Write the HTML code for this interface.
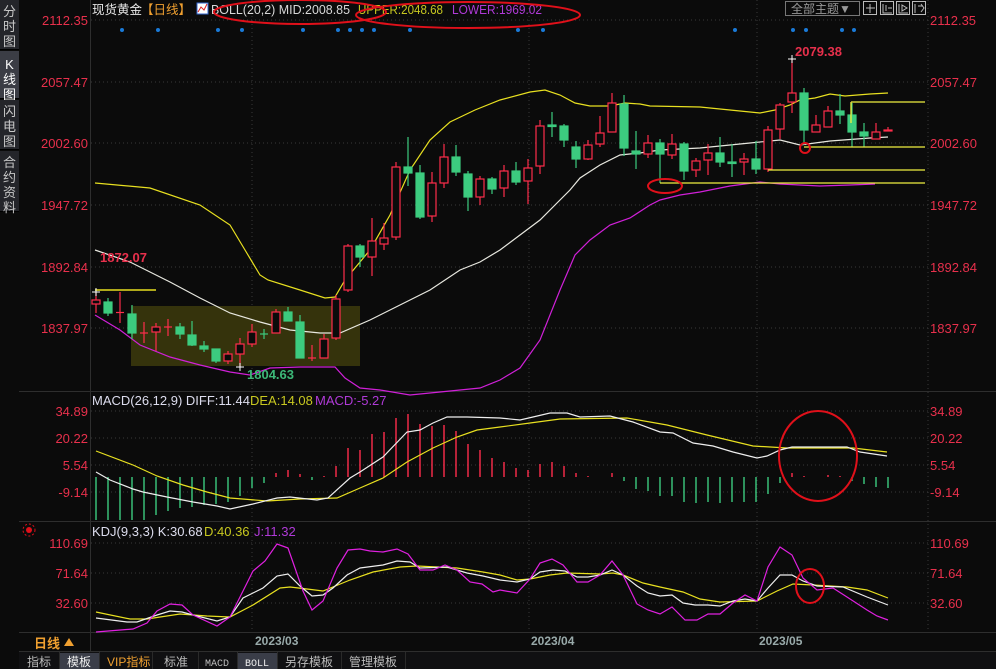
<!DOCTYPE html>
<html><head><meta charset="utf-8"><style>
*{margin:0;padding:0}
body{width:996px;height:669px;background:#0b0b0b;overflow:hidden;position:relative;font-family:"Liberation Sans","Noto Sans CJK SC",sans-serif}
svg{position:absolute;left:0;top:0}
.sb{position:absolute;left:0;width:19px;background:#24252a;color:#c8c8c8;font-size:13px;line-height:15px;text-align:center;border-bottom:1px solid #000}
</style></head><body>
<svg width="996" height="669" viewBox="0 0 996 669" font-family="Liberation Sans, Noto Sans CJK SC, sans-serif">
<rect width="996" height="669" fill="#0b0b0b"/>
<g stroke="#2e2e2e" stroke-width="1">
<line x1="90.5" y1="0" x2="90.5" y2="652"/>
<line x1="19" y1="391.5" x2="996" y2="391.5"/>
<line x1="19" y1="521.5" x2="996" y2="521.5"/>
<line x1="19" y1="632.5" x2="996" y2="632.5"/>
<line x1="19" y1="651.5" x2="996" y2="651.5"/>
</g>
<g stroke="#3a3a3a" stroke-dasharray="1,3">
<line x1="91" y1="20" x2="928" y2="20"/><line x1="91" y1="82" x2="928" y2="82"/><line x1="91" y1="143" x2="928" y2="143"/><line x1="91" y1="205" x2="928" y2="205"/><line x1="91" y1="267" x2="928" y2="267"/><line x1="91" y1="328" x2="928" y2="328"/>
<line x1="91" y1="411" x2="928" y2="411"/><line x1="91" y1="438" x2="928" y2="438"/><line x1="91" y1="465" x2="928" y2="465"/><line x1="91" y1="492" x2="928" y2="492"/>
<line x1="91" y1="543" x2="928" y2="543"/><line x1="91" y1="573" x2="928" y2="573"/><line x1="91" y1="603" x2="928" y2="603"/>
<line x1="252" y1="0" x2="252" y2="632"/><line x1="529" y1="0" x2="529" y2="632"/><line x1="757" y1="0" x2="757" y2="632"/><line x1="928" y1="0" x2="928" y2="632"/>
</g>
<g fill="#e8304c" font-size="13">
<g text-anchor="end"><text x="88" y="25">2112.35</text><text x="88" y="87">2057.47</text><text x="88" y="148">2002.60</text><text x="88" y="210">1947.72</text><text x="88" y="272">1892.84</text><text x="88" y="333">1837.97</text>
<text x="88" y="416">34.89</text><text x="88" y="443">20.22</text><text x="88" y="470">5.54</text><text x="88" y="497">-9.14</text>
<text x="88" y="548">110.69</text><text x="88" y="578">71.64</text><text x="88" y="608">32.60</text></g>
<text x="930" y="25">2112.35</text><text x="930" y="87">2057.47</text><text x="930" y="148">2002.60</text><text x="930" y="210">1947.72</text><text x="930" y="272">1892.84</text><text x="930" y="333">1837.97</text>
<text x="930" y="416">34.89</text><text x="930" y="443">20.22</text><text x="930" y="470">5.54</text><text x="930" y="497">-9.14</text>
<text x="930" y="548">110.69</text><text x="930" y="578">71.64</text><text x="930" y="608">32.60</text>
</g>
<g font-size="12.5">
<text x="92" y="14" fill="#e8e8e8">现货黄金</text>
<text x="141" y="14" fill="#f0a030">【日线】</text>
<rect x="197" y="3" width="11" height="11" fill="#fff" stroke="#36c" /><polyline points="198,12 201,7 204,10 207,4" stroke="#d22" fill="none"/>
<text x="211" y="14" fill="#d8d8d8" textLength="139" lengthAdjust="spacingAndGlyphs">BOLL(20,2) MID:2008.85</text>
<text x="358" y="14" fill="#c8c820" textLength="85" lengthAdjust="spacingAndGlyphs">UPPER:2048.68</text>
<text x="452" y="14" fill="#b03ad8" textLength="90" lengthAdjust="spacingAndGlyphs">LOWER:1969.02</text>
</g>
<ellipse cx="300" cy="12" rx="86" ry="12" fill="none" stroke="#e0101a" stroke-width="2"/>
<ellipse cx="468" cy="15" rx="112" ry="13" fill="none" stroke="#e0101a" stroke-width="2"/>
<rect x="785.5" y="1.5" width="74" height="14" fill="none" stroke="#777"/>
<text x="791" y="13" font-size="12" fill="#999">全部主题▼</text>
<g fill="none" stroke="#bbb"><rect x="863.5" y="1.5" width="13" height="13"/><rect x="880.5" y="1.5" width="13" height="13"/><rect x="896.5" y="1.5" width="13" height="13"/><rect x="912.5" y="1.5" width="13" height="13"/>
<path d="M870 4v9M866 8h9M883 4v9h9M886 5v6M888 8h4M899 4v9h9M902 5l5 3-5 3zM915 4v9M918 6h5M921 4l3 4-3 4"/></g>
<g fill="#1a7ad8"><circle cx="122" cy="30" r="2"/><circle cx="158" cy="30" r="2"/><circle cx="218" cy="30" r="2"/><circle cx="242" cy="30" r="2"/><circle cx="303" cy="30" r="2"/><circle cx="338" cy="30" r="2"/><circle cx="350" cy="30" r="2"/><circle cx="362" cy="30" r="2"/><circle cx="374" cy="30" r="2"/><circle cx="410" cy="30" r="2"/><circle cx="518" cy="30" r="2"/><circle cx="543" cy="30" r="2"/><circle cx="735" cy="30" r="2"/><circle cx="793" cy="30" r="2"/><circle cx="806" cy="30" r="2"/><circle cx="842" cy="30" r="2"/><circle cx="854" cy="30" r="2"/></g>
<rect x="131" y="306" width="229" height="60" fill="#35330c"/>
<g fill="none" stroke-width="1.2">
<polyline stroke="#e8e020" points="95,183 150,188 200,205 230,225 245,250 260,275 268,280 300,290 325,298 335,297 345,280 370,250 390,215 410,170 430,140 450,122 475,110 500,100 530,92 545,90 560,95 575,103 590,106 610,106 625,103 640,104 650,106 700,107 730,110 760,113 775,110 790,105 800,100 815,98 830,94 845,96 870,94 888,93"/>
<polyline stroke="#e8e8e0" points="95,250 130,262 170,282 200,298 230,313 260,322 290,330 320,333 340,333 370,320 400,305 430,290 460,270 480,262 500,250 520,235 540,220 555,205 570,190 580,178 600,165 620,155 640,153 660,150 700,148 720,146 750,143 780,140 800,145 830,141 870,138 888,137"/>
<polyline stroke="#d020d8" points="95,315 120,330 140,345 170,357 200,365 230,372 250,375 270,368 300,367 335,367 345,378 360,388 380,390 410,395 440,392 480,388 500,380 520,368 540,340 560,290 575,255 590,240 610,225 630,218 650,205 660,200 680,195 700,192 730,186 760,182 780,184 820,186 850,185 875,184"/>
</g>
<g stroke="#ff2d4b" stroke-width="1.2" fill="#0b0b0b">
<line x1="96" y1="292" x2="96" y2="313"/><rect x="92" y="300" width="8" height="4"/>
<line x1="120" y1="292" x2="120" y2="323"/><line x1="116" y1="312.5" x2="124" y2="312.5"/>
<line x1="144" y1="322" x2="144" y2="343"/><line x1="140" y1="333" x2="148" y2="333"/>
<line x1="156" y1="323" x2="156" y2="351"/><rect x="152" y="327" width="8" height="5"/>
<line x1="168" y1="319" x2="168" y2="336"/><line x1="164" y1="327" x2="172" y2="327"/>
<line x1="228" y1="351" x2="228" y2="364"/><rect x="224" y="354" width="8" height="7"/>
<line x1="240" y1="338" x2="240" y2="367"/><rect x="236" y="344" width="8" height="10"/>
<line x1="252" y1="324" x2="252" y2="347"/><rect x="248" y="332" width="8" height="12"/>
<line x1="276" y1="309" x2="276" y2="333"/><rect x="272" y="312" width="8" height="21"/>
<line x1="312" y1="345" x2="312" y2="361"/><line x1="308" y1="358" x2="316" y2="358"/>
<line x1="324" y1="334" x2="324" y2="358"/><rect x="320" y="339" width="8" height="19"/>
<line x1="336" y1="295" x2="336" y2="340"/><rect x="332" y="299" width="8" height="39"/>
<line x1="348" y1="244" x2="348" y2="292"/><rect x="344" y="246" width="8" height="44"/>
<line x1="372" y1="218" x2="372" y2="276"/><rect x="368" y="241" width="8" height="16"/>
<line x1="384" y1="223" x2="384" y2="250"/><rect x="380" y="238" width="8" height="6"/>
<line x1="396" y1="162" x2="396" y2="240"/><rect x="392" y="167" width="8" height="70"/>
<line x1="432" y1="172" x2="432" y2="222"/><rect x="428" y="183" width="8" height="33"/>
<line x1="444" y1="144" x2="444" y2="188"/><rect x="440" y="157" width="8" height="26"/>
<line x1="480" y1="176" x2="480" y2="205"/><rect x="476" y="179" width="8" height="18"/>
<line x1="504" y1="165" x2="504" y2="197"/><rect x="500" y="171" width="8" height="17"/>
<line x1="528" y1="159" x2="528" y2="204"/><rect x="524" y="168" width="8" height="13"/>
<line x1="540" y1="120" x2="540" y2="174"/><rect x="536" y="126" width="8" height="40"/>
<line x1="588" y1="140" x2="588" y2="160"/><rect x="584" y="145" width="8" height="14"/>
<line x1="600" y1="116" x2="600" y2="147"/><rect x="596" y="133" width="8" height="11"/>
<line x1="612" y1="93" x2="612" y2="132"/><rect x="608" y="103" width="8" height="29"/>
<line x1="648" y1="135" x2="648" y2="158"/><rect x="644" y="143" width="8" height="11"/>
<line x1="672" y1="134" x2="672" y2="159"/><rect x="668" y="144" width="8" height="11"/>
<line x1="696" y1="158" x2="696" y2="177"/><rect x="692" y="161" width="8" height="9"/>
<line x1="708" y1="144" x2="708" y2="175"/><rect x="704" y="153" width="8" height="7"/>
<line x1="744" y1="153" x2="744" y2="175"/><rect x="740" y="159" width="8" height="3"/>
<line x1="768" y1="126" x2="768" y2="172"/><rect x="764" y="130" width="8" height="39"/>
<line x1="780" y1="103" x2="780" y2="139"/><rect x="776" y="105" width="8" height="24"/>
<line x1="792" y1="59" x2="792" y2="113"/><rect x="788" y="93" width="8" height="9"/>
<line x1="816" y1="115" x2="816" y2="132"/><rect x="812" y="125" width="8" height="7"/>
<line x1="828" y1="106" x2="828" y2="127"/><rect x="824" y="111" width="8" height="16"/>
<line x1="876" y1="123" x2="876" y2="139"/><rect x="872" y="132" width="8" height="7"/>
<line x1="888" y1="127" x2="888" y2="131"/><rect x="884" y="130" width="8" height="1"/>
</g>
<g stroke="#3ccb7f" stroke-width="1.2" fill="#3ccb7f">
<line x1="108" y1="298" x2="108" y2="316"/><rect x="104" y="302" width="8" height="11"/>
<line x1="132" y1="305" x2="132" y2="339"/><rect x="128" y="314" width="8" height="19"/>
<line x1="180" y1="323" x2="180" y2="339"/><rect x="176" y="327" width="8" height="7"/>
<line x1="192" y1="321" x2="192" y2="346"/><rect x="188" y="335" width="8" height="10"/>
<line x1="204" y1="341" x2="204" y2="352"/><rect x="200" y="346" width="8" height="3"/>
<line x1="216" y1="349" x2="216" y2="363"/><rect x="212" y="349" width="8" height="12"/>
<line x1="264" y1="329" x2="264" y2="339"/><line x1="260" y1="334" x2="268" y2="334"/>
<line x1="288" y1="307" x2="288" y2="321"/><rect x="284" y="312" width="8" height="9"/>
<line x1="300" y1="315" x2="300" y2="358"/><rect x="296" y="322" width="8" height="36"/>
<line x1="360" y1="244" x2="360" y2="267"/><rect x="356" y="246" width="8" height="11"/>
<line x1="408" y1="137" x2="408" y2="186"/><rect x="404" y="167" width="8" height="6"/>
<line x1="420" y1="165" x2="420" y2="219"/><rect x="416" y="173" width="8" height="44"/>
<line x1="456" y1="145" x2="456" y2="176"/><rect x="452" y="157" width="8" height="15"/>
<line x1="468" y1="171" x2="468" y2="211"/><rect x="464" y="174" width="8" height="23"/>
<line x1="492" y1="177" x2="492" y2="194"/><rect x="488" y="179" width="8" height="10"/>
<line x1="516" y1="162" x2="516" y2="185"/><rect x="512" y="171" width="8" height="11"/>
<line x1="552" y1="112" x2="552" y2="137"/><rect x="548" y="125" width="8" height="1.5"/>
<line x1="564" y1="124" x2="564" y2="147"/><rect x="560" y="126" width="8" height="14"/>
<line x1="576" y1="141" x2="576" y2="168"/><rect x="572" y="147" width="8" height="12"/>
<line x1="624" y1="95" x2="624" y2="156"/><rect x="620" y="104" width="8" height="44"/>
<line x1="636" y1="131" x2="636" y2="169"/><rect x="632" y="151" width="8" height="3"/>
<line x1="660" y1="139" x2="660" y2="183"/><rect x="656" y="143" width="8" height="11"/>
<line x1="684" y1="142" x2="684" y2="180"/><rect x="680" y="144" width="8" height="27"/>
<line x1="720" y1="137" x2="720" y2="167"/><rect x="716" y="153" width="8" height="9"/>
<line x1="732" y1="144" x2="732" y2="177"/><rect x="728" y="162" width="8" height="1.5"/>
<line x1="756" y1="141" x2="756" y2="174"/><rect x="752" y="159" width="8" height="10"/>
<line x1="804" y1="88" x2="804" y2="145"/><rect x="800" y="93" width="8" height="37"/>
<line x1="840" y1="94" x2="840" y2="124"/><rect x="836" y="111" width="8" height="4"/>
<line x1="852" y1="103" x2="852" y2="147"/><rect x="848" y="115" width="8" height="17"/>
<line x1="864" y1="123" x2="864" y2="147"/><rect x="860" y="132" width="8" height="4"/>
</g>
<line x1="95" y1="290" x2="156" y2="290" stroke="#e8e020" stroke-width="1.5"/>
<path d="M92 292h8M96 288v8M236 367h8M240 363v8M788 59h8M792 55v8" stroke="#fff"/>
<text x="100" y="262" font-size="13" font-weight="bold" fill="#e8304c">1872.07</text>
<text x="247" y="379" font-size="13" font-weight="bold" fill="#3cb878">1804.63</text>
<text x="795" y="56" font-size="13" font-weight="bold" fill="#e8304c">2079.38</text>
<g stroke="#f0f040" stroke-width="1.3" fill="none">
<path d="M851 102H925M851 102V123M804 147H925M768 170H925M660 183H925"/>
</g>
<ellipse cx="665" cy="186" rx="17" ry="7" fill="none" stroke="#e0101a" stroke-width="2"/>
<circle cx="805" cy="148" r="5" fill="none" stroke="#e0101a" stroke-width="2"/>
<g font-size="13"><text x="92" y="405" fill="#dde">MACD(26,12,9) DIFF:11.44</text><text x="250" y="405" fill="#c8c820">DEA:14.08</text><text x="315" y="405" fill="#b03ad8">MACD:-5.27</text></g>
<g stroke="#3ccb7f" stroke-width="1.4">
<path d="M96 477V520M108 477V520M120 477V520M132 477V520M144 477V520M156 477V515M168 477V511M180 477V508M192 477V507M204 477V505M216 477V504M228 477V502M240 477V496M252 477V488M264 477V483M312 477V480"/>
<path d="M624 477V481M636 477V489M648 477V491M660 477V496M672 477V496M684 477V502M696 477V503M708 477V502M720 477V503M732 477V502M744 477V502M756 477V502M768 477V494M780 477V483M852 477V481M864 477V484M876 477V487M888 477V488"/>
</g>
<g stroke="#ff2d4b" stroke-width="1.4">
<path d="M276 477V473M288 477V470M300 477V474M324 477V476M336 477V466M348 477V448M360 477V450M372 477V434M384 477V432M396 477V418M408 477V414M420 477V424M432 477V426M444 477V425M456 477V431M468 477V444M480 477V450M492 477V458M504 477V462M516 477V468M528 477V470M540 477V464M552 477V462M564 477V466M576 477V473M588 477V476M612 477V473M792 477V473M804 477V476M828 477V475M840 477V476"/>
</g>
<g fill="none" stroke-width="1.2">
<polyline stroke="#e8e020" points="96,451 133,465 157,476 183,485 207,492 230,498 267,501 300,499 337,498 360,488 383,478 407,462 433,448 457,437 477,430 500,427 530,423 560,419 627,418 667,425 707,435 753,446 787,448 853,448 887,452"/>
<polyline stroke="#eee" points="96,472 110,480 133,489 143,492 167,497 193,502 217,506 230,509 253,504 277,498 290,497 317,500 328,498 350,478 360,472 383,457 407,432 420,430 433,423 447,417 467,417 500,418 520,420 533,417 550,413 567,413 580,417 610,416 633,422 660,432 673,433 693,443 713,446 733,452 757,458 767,456 780,450 792,447 847,447 860,452 887,456"/>
</g>
<ellipse cx="818" cy="456" rx="39" ry="45" fill="none" stroke="#e0101a" stroke-width="2"/>
<circle cx="29" cy="530" r="3" fill="#e0101a"/><circle cx="29" cy="530" r="6" fill="none" stroke="#e0101a" stroke-dasharray="2,2"/>
<g font-size="13"><text x="92" y="536" fill="#dde">KDJ(9,3,3) K:30.68</text><text x="204" y="536" fill="#c8c820">D:40.36</text><text x="254" y="536" fill="#b03ad8">J:11.32</text></g>
<g fill="none" stroke-width="1.2">
<polyline stroke="#e8e020" points="96,612 130,619 147,619 180,614 207,616 230,617 253,605 280,588 290,587 307,589 323,591 350,580 373,572 400,567 417,566 457,568 483,572 500,575 517,580 530,579 550,575 567,573 600,574 613,573 623,575 643,583 660,587 683,592 700,599 720,602 757,601 777,591 793,584 813,585 847,587 867,590 888,598"/>
<polyline stroke="#eee" points="96,618 127,622 137,622 157,615 170,611 182,612 193,615 217,621 230,617 243,598 263,588 277,576 288,574 300,586 312,596 323,595 333,588 347,575 360,568 383,565 397,561 410,562 420,568 447,567 467,573 483,576 500,580 517,582 530,579 540,572 553,570 565,571 577,577 588,577 600,575 612,570 623,575 637,586 648,593 660,596 672,595 683,603 695,605 708,605 720,606 733,601 745,599 757,601 768,588 780,575 792,575 803,581 817,586 843,587 867,597 888,605"/>
<polyline stroke="#e020e0" points="96,632 133,629 147,623 157,611 170,604 182,605 193,615 217,626 230,617 253,571 265,561 277,544 288,548 303,591 312,610 323,601 337,568 348,550 360,549 370,551 383,552 397,549 408,554 420,570 433,570 445,565 457,570 470,582 482,584 493,592 500,590 517,593 530,579 540,563 552,559 563,565 577,582 588,582 600,575 612,561 623,575 637,604 648,610 660,614 672,607 685,620 697,620 708,614 720,614 733,603 745,595 757,601 768,567 780,547 792,555 803,578 817,590 833,588 847,597 867,610 877,616 888,620"/>
</g>
<ellipse cx="810" cy="586" rx="14" ry="17" fill="none" stroke="#e0101a" stroke-width="2"/>
<text x="34" y="648" font-size="13" font-weight="bold" fill="#f0a030">日线</text>
<path d="M64 646l5-8 5 8z" fill="#f0a030"/>
<g font-size="12" font-weight="bold" fill="#9aa"><text x="255" y="645">2023/03</text><text x="531" y="645">2023/04</text><text x="759" y="645">2023/05</text></g>
<rect x="19" y="652" width="977" height="17" fill="#101012"/>
<rect x="60" y="653" width="39" height="16" fill="#3a3d48"/><rect x="238" y="653" width="39" height="16" fill="#3a3d48"/>
<g stroke="#2a2a2a"><path d="M59.5 652v17M99.5 652v17M152.5 652v17M198.5 652v17M237.5 652v17M277.5 652v17M341.5 652v17M405.5 652v17"/></g>
<g font-size="12" fill="#bbb"><text x="27" y="666">指标</text><text x="67" y="666" fill="#eee">模板</text><text x="107" y="666" fill="#f0a030">VIP指标</text><text x="164" y="666">标准</text><text x="205" y="666" font-size="10" font-family="Liberation Mono, monospace">MACD</text><text x="245" y="666" font-size="10" fill="#eee" font-family="Liberation Mono, monospace">BOLL</text><text x="285" y="666">另存模板</text><text x="349" y="666">管理模板</text></g>
</svg>
<div class="sb" style="top:0;height:50px;padding-top:4px;box-sizing:border-box">分<br>时<br>图</div>
<div class="sb" style="top:51px;height:48px;padding-top:6px;box-sizing:border-box;background:#3b3d45;color:#fff">K<br>线<br>图</div>
<div class="sb" style="top:100px;height:50px;padding-top:4px;box-sizing:border-box">闪<br>电<br>图</div>
<div class="sb" style="top:151px;height:61px;padding-top:4px;box-sizing:border-box">合<br>约<br>资<br>料</div>
</body></html>
